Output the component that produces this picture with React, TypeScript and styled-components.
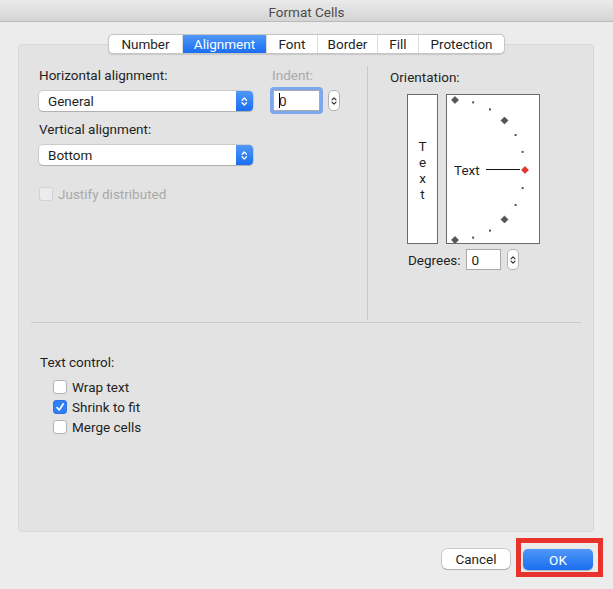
import React from 'react'
import styled, { createGlobalStyle } from 'styled-components'

const GlobalStyle = createGlobalStyle`
  html, body {
    margin: 0;
    padding: 0;
    background: #ececec;
  }
  * {
    box-sizing: border-box;
  }
  body {
    font-family: Roboto, "Liberation Sans", sans-serif;
    font-size: 13.5px;
    color: #1f1f1f;
  }
`

const Window = styled.div`
  width: 614px;
  height: 589px;
  display: flex;
  flex-direction: column;
  background: #ececec;
  border-right: 1px solid #d6d6d6;
  overflow: hidden;
`

const TitleBar = styled.div`
  height: 22px;
  flex: none;
  display: flex;
  align-items: center;
  justify-content: center;
  padding-top: 2px;
  background: linear-gradient(#ebebeb, #d4d4d4);
  border-bottom: 1px solid #b9b9b9;
  color: #4d4d4d;
  font-size: 13.5px;
`

const Body = styled.div`
  display: flex;
  flex-direction: column;
  padding: 12px 0 0 18px;
`

const TabBar = styled.div`
  position: relative;
  z-index: 1;
  align-self: flex-start;
  display: flex;
  height: 20px;
  margin-left: 90px;
  margin-bottom: -10px;
  background: #fff;
  border: 1px solid #c6c6c6;
  border-radius: 5px;
  overflow: hidden;
  box-shadow: 0 0.5px 1px rgba(0, 0, 0, 0.12);
`

const Tab = styled.div<{ $active?: boolean; $w: number }>`
  width: ${(p) => p.$w}px;
  display: flex;
  align-items: center;
  justify-content: center;
  color: ${(p) => (p.$active ? '#fff' : '#1f1f1f')};
  background: ${(p) => (p.$active ? 'linear-gradient(#4f97f8, #1a6ef0)' : 'transparent')};
  & + & {
    border-left: 1px solid #dcdcdc;
  }
`

const Panel = styled.div`
  width: 576px;
  height: 488px;
  display: flex;
  flex-direction: column;
  padding: 0 12px;
  background: #e3e3e3;
  border: 1px solid #d8d8d8;
  border-radius: 4px;
`

const TopSection = styled.div`
  height: 278px;
  display: flex;
  border-bottom: 1px solid #cacaca;
  padding-bottom: 2px;
`

const LeftCol = styled.div`
  width: 336px;
  display: flex;
  padding: 22px 0 0 8px;
  gap: 17px;
`

const FieldCol = styled.div`
  display: flex;
  flex-direction: column;
`

const Label = styled.div<{ $muted?: boolean; $top?: number }>`
  line-height: 16px;
  height: 16px;
  margin-top: ${(p) => p.$top ?? 0}px;
  color: ${(p) => (p.$muted ? '#a9a9a9' : '#1f1f1f')};
`

const SelectBox = styled.div`
  width: 214px;
  height: 20px;
  margin-top: 8px;
  display: flex;
  align-items: center;
  background: #fff;
  border-radius: 4px;
  box-shadow: 0 0 0 0.5px rgba(0, 0, 0, 0.2), 0 1px 1px rgba(0, 0, 0, 0.15);
  overflow: hidden;
`

const SelectText = styled.span`
  flex: 1;
  padding-left: 9px;
`

const SelectArrow = styled.span`
  width: 17px;
  height: 100%;
  display: flex;
  align-items: center;
  justify-content: center;
  background: linear-gradient(#4f97f8, #1a6ef0);
`

const CheckRow = styled.label<{ $disabled?: boolean; $top?: number }>`
  display: flex;
  align-items: center;
  gap: 5px;
  height: 20px;
  margin-top: ${(p) => p.$top ?? 0}px;
  color: ${(p) => (p.$disabled ? '#a9a9a9' : '#1f1f1f')};
`

const Box = styled.span<{ $checked?: boolean; $disabled?: boolean }>`
  width: 14px;
  height: 14px;
  flex: none;
  display: flex;
  align-items: center;
  justify-content: center;
  border-radius: 3px;
  background: ${(p) => (p.$checked ? '#2f7ff6' : p.$disabled ? '#ececec' : '#fff')};
  border: 1px solid ${(p) => (p.$checked ? '#2a72e0' : p.$disabled ? '#d2d2d2' : '#b3b3b3')};
`

const IndentRow = styled.div`
  display: flex;
  align-items: center;
  gap: 5px;
  margin-top: 4px;
`

const FocusRing = styled.div`
  width: 53px;
  height: 27px;
  padding: 3px;
  border-radius: 4px;
  background: #7fa7ef;
`

const NumInput = styled.div<{ $w: number; $h: number }>`
  width: ${(p) => p.$w}px;
  height: ${(p) => p.$h}px;
  display: flex;
  align-items: center;
  padding-left: 5px;
  background: #fff;
  border: 1px solid #a9a9a9;
`

const Caret = styled.span`
  width: 1px;
  height: 15px;
  margin-right: -1px;
  background: #000;
`

const Stepper = styled.div`
  width: 12px;
  height: 21px;
  display: flex;
  align-items: center;
  justify-content: center;
  background: #fff;
  border: 1px solid #b3b3b3;
  border-radius: 5px;
`

const RightCol = styled.div`
  flex: 1;
  margin-top: 21px;
  border-left: 1px solid #c9c9c9;
  padding: 3px 0 0 22px;
  display: flex;
  flex-direction: column;
`

const OrientRow = styled.div`
  display: flex;
  gap: 8px;
  margin: 9px 0 0 17px;
`

const VerticalText = styled.div`
  width: 31px;
  height: 150px;
  display: flex;
  flex-direction: column;
  align-items: center;
  justify-content: center;
  background: #fff;
  border: 1px solid #6b6b6b;
  line-height: 16px;
  padding-top: 2px;
`

const Dial = styled.svg`
  width: 94px;
  height: 150px;
  background: #fff;
  border: 1px solid #6b6b6b;
`

const DegreesRow = styled.div`
  display: flex;
  align-items: center;
  margin: 5px 0 0 18px;
  gap: 5px;
`

const BottomSection = styled.div`
  display: flex;
  flex-direction: column;
  padding: 31px 0 0 9px;
`

const CheckList = styled.div`
  display: flex;
  flex-direction: column;
  margin: 7px 0 0 13px;
`

const Footer = styled.div`
  display: flex;
  justify-content: flex-end;
  align-items: center;
  gap: 6px;
  padding: 6px 10px 0 0;
`

const CancelButton = styled.button`
  width: 68px;
  height: 20px;
  margin-top: 3px;
  padding: 0;
  font: inherit;
  color: #1f1f1f;
  background: #fff;
  border: none;
  border-radius: 5px;
  box-shadow: 0 0 0 0.5px rgba(0, 0, 0, 0.28), 0 1px 1px rgba(0, 0, 0, 0.15);
`

const Highlight = styled.div`
  border: 5px solid #e8322c;
  padding: 6px 5px 2px 2px;
`

const OkButton = styled.button`
  width: 70px;
  height: 21px;
  padding: 0;
  font: inherit;
  color: #fff;
  background: linear-gradient(#4f97f8, #1a6ef0);
  border: none;
  border-radius: 5px;
  box-shadow: 0 0.5px 1px rgba(0, 0, 0, 0.25);
`

const UpDown = ({ color, size }: { color: string; size: number }) => (
  <svg width={size * 0.6} height={size} viewBox="0 0 6 10" fill="none" stroke={color} strokeWidth="1.2" strokeLinecap="round" strokeLinejoin="round">
    <path d="M1 3.8 L3 1.8 L5 3.8" />
    <path d="M1 6.2 L3 8.2 L5 6.2" />
  </svg>
)

const Check = () => (
  <svg width="10" height="10" viewBox="0 0 10 10" fill="none" stroke="#fff" strokeWidth="1.6" strokeLinecap="round" strokeLinejoin="round">
    <path d="M2 5.5 L4.2 8 L8.3 1.8" />
  </svg>
)

const tabs = [
  { name: 'Number', w: 73 },
  { name: 'Alignment', w: 84 },
  { name: 'Font', w: 51 },
  { name: 'Border', w: 60 },
  { name: 'Fill', w: 41 },
  { name: 'Protection', w: 86 },
]

// dial geometry: arc around (8, 75), radius 70, marks every 15 degrees
const marks = [90, 75, 60, 45, 30, 15, 0, -15, -30, -45, -60, -75, -90].map((deg) => {
  const r = (deg * Math.PI) / 180
  return { deg, x: 8 + 70 * Math.cos(r), y: 75 - 70 * Math.sin(r) }
})

const OrientationDial = () => (
  <Dial viewBox="0 0 92 148">
    {marks.map((m) =>
      m.deg % 45 === 0 ? (
        <rect
          key={m.deg}
          x={m.x - 2.5}
          y={m.y - 2.5}
          width="5"
          height="5"
          transform={`rotate(45 ${m.x} ${m.y})`}
          fill={m.deg === 0 ? '#e8322c' : '#555'}
          stroke={m.deg === 0 ? '#b01c18' : '#333'}
          strokeWidth="0.5"
        />
      ) : (
        <rect key={m.deg} x={m.x - 1} y={m.y - 1} width="2" height="2" fill="#555" />
      )
    )}
    <line x1="39" y1="74.5" x2="73" y2="74.5" stroke="#111" strokeWidth="1" />
    <text x="7" y="79.5" fontSize="13.5" fill="#1f1f1f" fontFamily="Roboto, 'Liberation Sans', sans-serif">
      Text
    </text>
  </Dial>
)

export default function App() {
  return (
    <Window>
      <GlobalStyle />
      <TitleBar>Format Cells</TitleBar>
      <Body>
        <TabBar>
          {tabs.map((t) => (
            <Tab key={t.name} $w={t.w} $active={t.name === 'Alignment'}>
              {t.name}
            </Tab>
          ))}
        </TabBar>
        <Panel>
          <TopSection>
            <LeftCol>
              <FieldCol>
                <Label>Horizontal alignment:</Label>
                <SelectBox>
                  <SelectText>General</SelectText>
                  <SelectArrow>
                    <UpDown color="#fff" size={11} />
                  </SelectArrow>
                </SelectBox>
                <Label $top={10}>Vertical alignment:</Label>
                <SelectBox>
                  <SelectText>Bottom</SelectText>
                  <SelectArrow>
                    <UpDown color="#fff" size={11} />
                  </SelectArrow>
                </SelectBox>
                <CheckRow $disabled $top={19}>
                  <Box $disabled />
                  Justify distributed
                </CheckRow>
              </FieldCol>
              <FieldCol>
                <Label $muted style={{ paddingLeft: 2 }}>Indent:</Label>
                <IndentRow>
                  <FocusRing>
                    <NumInput $w={47} $h={21}>
                      <Caret />0
                    </NumInput>
                  </FocusRing>
                  <Stepper>
                    <UpDown color="#333" size={10} />
                  </Stepper>
                </IndentRow>
              </FieldCol>
            </LeftCol>
            <RightCol>
              <Label>Orientation:</Label>
              <OrientRow>
                <VerticalText>
                  <span>T</span>
                  <span>e</span>
                  <span>x</span>
                  <span>t</span>
                </VerticalText>
                <OrientationDial />
              </OrientRow>
              <DegreesRow>
                <span>Degrees:</span>
                <NumInput $w={35} $h={21}>0</NumInput>
                <Stepper style={{ marginLeft: 1 }}>
                  <UpDown color="#333" size={10} />
                </Stepper>
              </DegreesRow>
            </RightCol>
          </TopSection>
          <BottomSection>
            <Label>Text control:</Label>
            <CheckList>
              <CheckRow>
                <Box />
                Wrap text
              </CheckRow>
              <CheckRow>
                <Box $checked>
                  <Check />
                </Box>
                Shrink to fit
              </CheckRow>
              <CheckRow>
                <Box />
                Merge cells
              </CheckRow>
            </CheckList>
          </BottomSection>
        </Panel>
        <Footer>
          <CancelButton>Cancel</CancelButton>
          <Highlight>
            <OkButton>OK</OkButton>
          </Highlight>
        </Footer>
      </Body>
    </Window>
  )
}
